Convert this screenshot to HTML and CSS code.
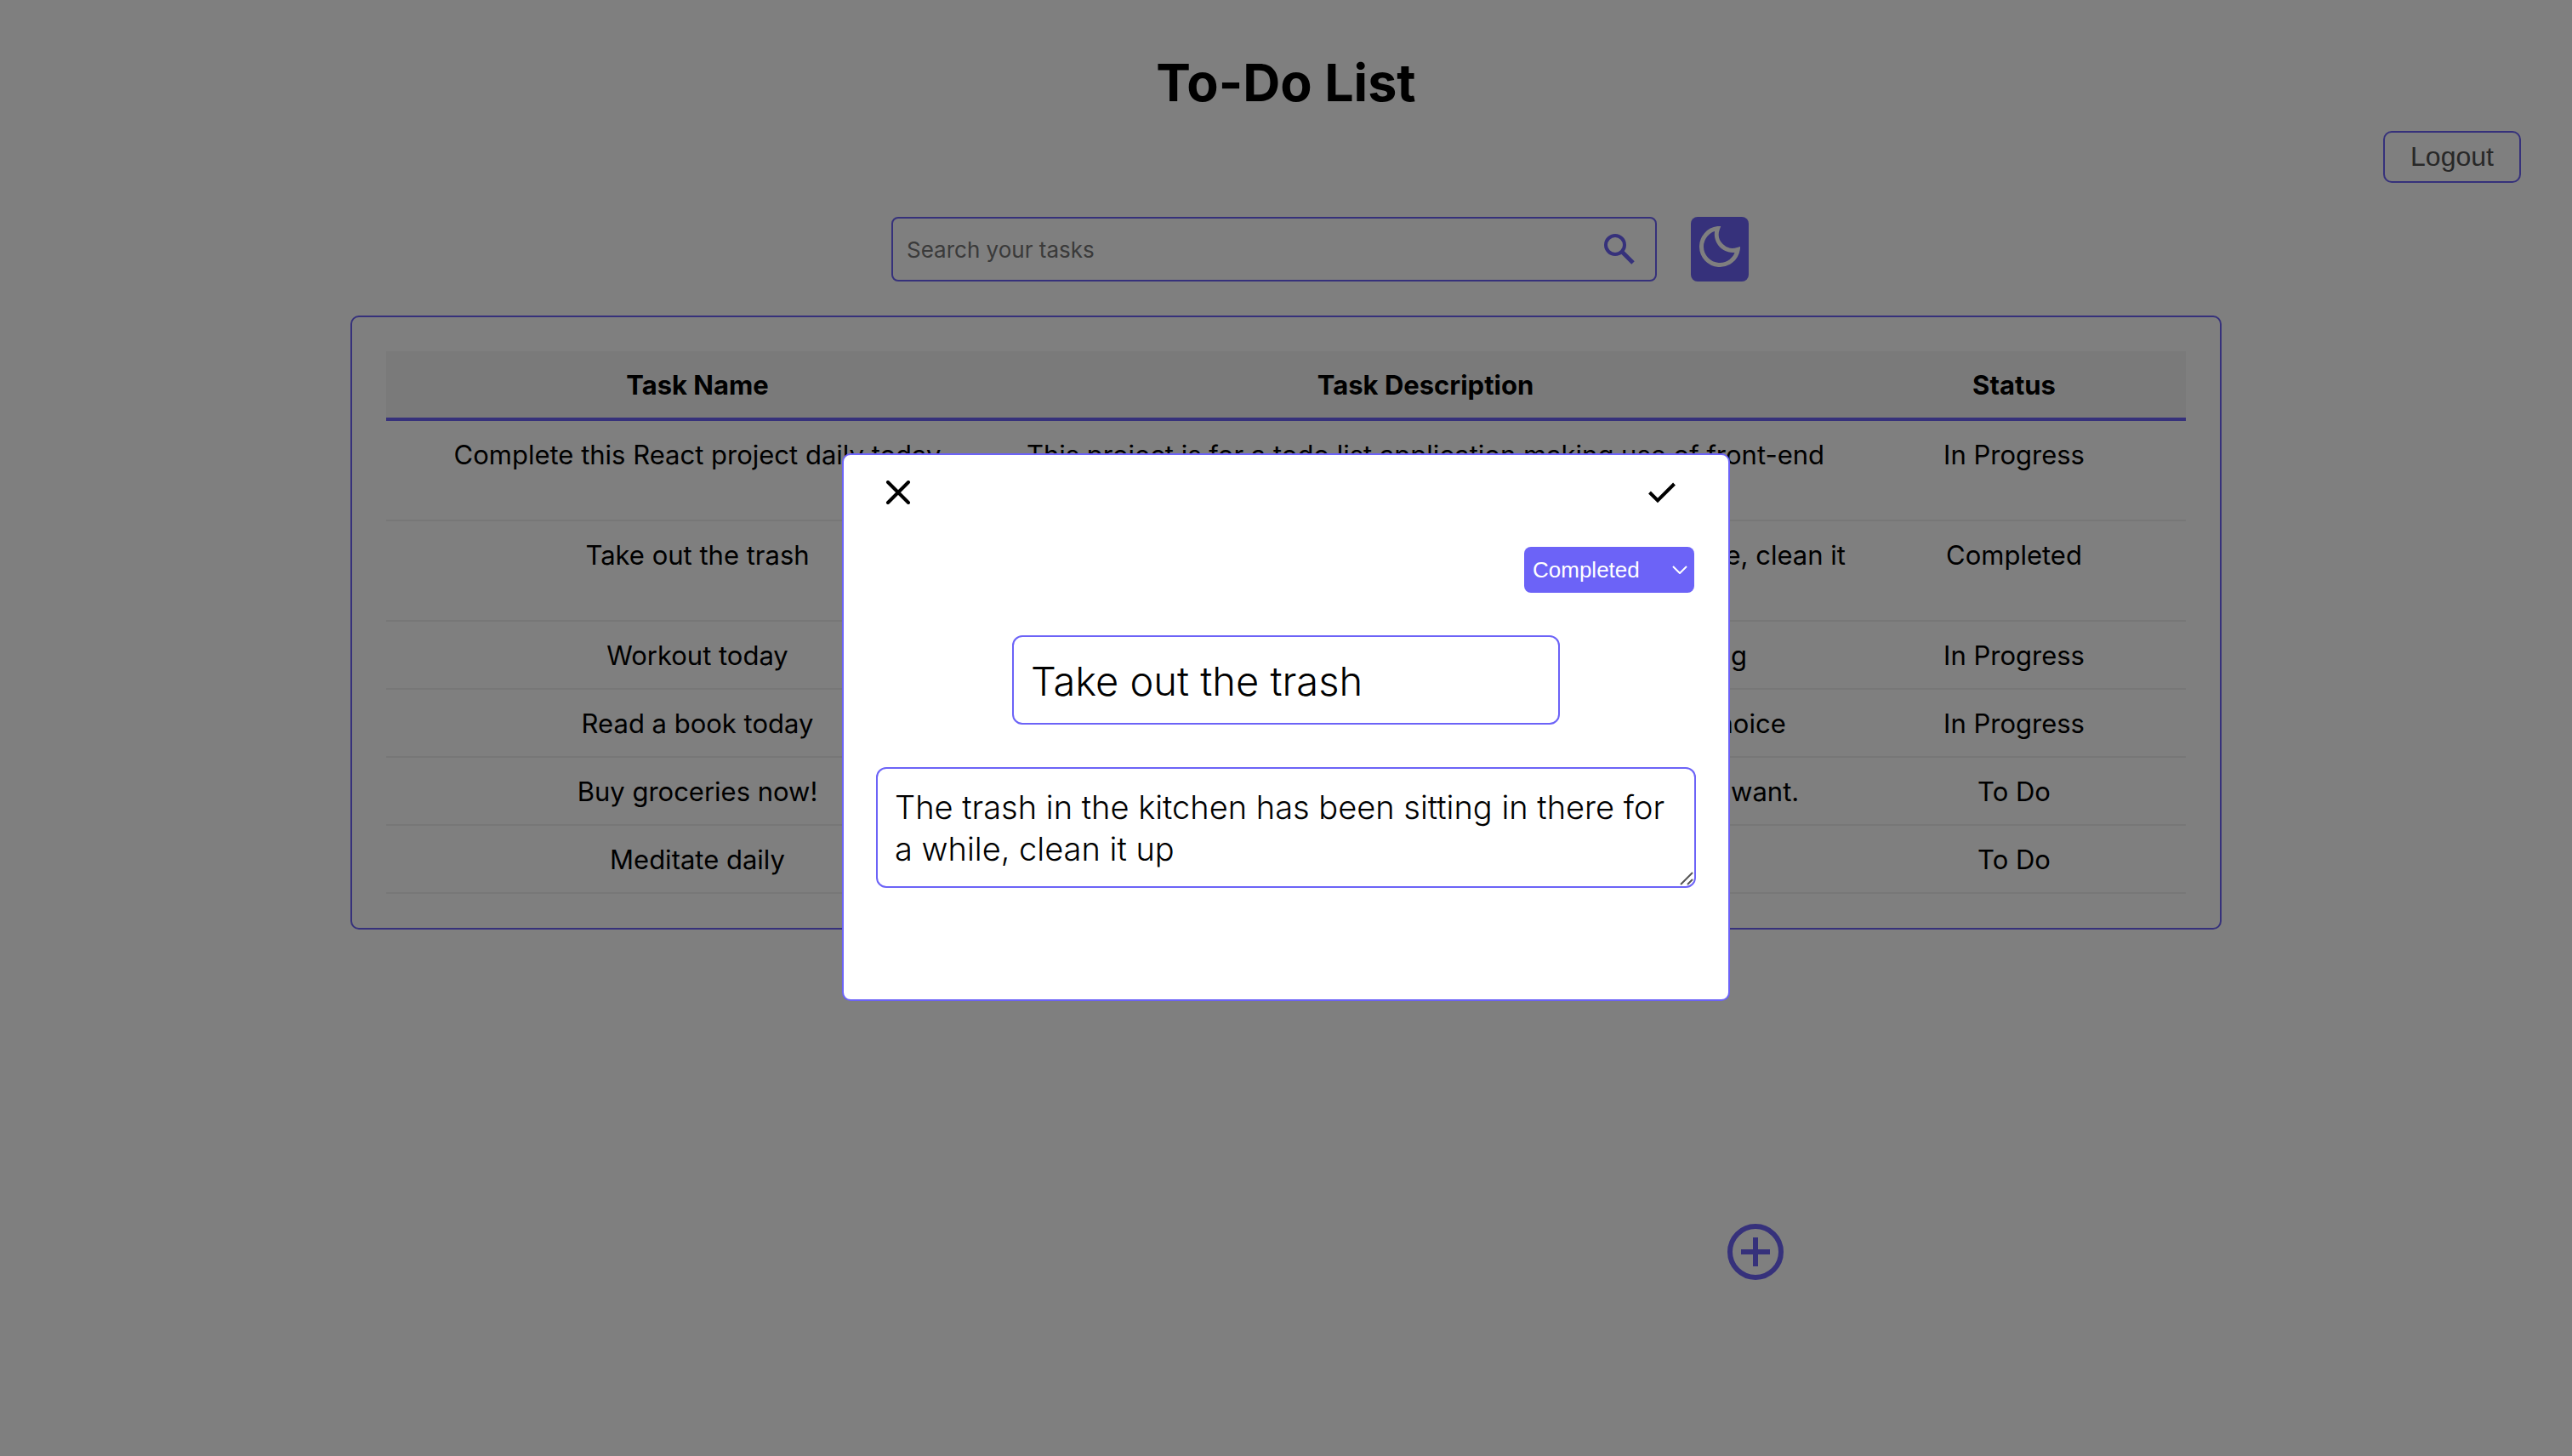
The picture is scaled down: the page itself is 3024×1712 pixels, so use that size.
FILE: index.html
```html
<!DOCTYPE html>
<html lang="en">
<head>
<meta charset="utf-8">
<meta name="viewport" content="width=device-width, initial-scale=1">
<title>To-Do List</title>
<link rel="stylesheet" href="styles.css">
</head>
<body>
<div class="page">
  <header class="header">
    <h1 class="title">To-Do List</h1>
    <button class="logout" type="button">Logout</button>
  </header>

  <div class="toolbar">
    <form class="search" role="search">
      <input class="search-input" type="text" placeholder="Search your tasks" aria-label="Search your tasks">
      <button class="search-button" type="button" aria-label="Search">
        <svg class="icon-search" viewBox="0 0 36 36" fill="none" stroke="currentColor" stroke-width="4">
          <circle cx="13" cy="13" r="11"/>
          <path d="M20.500 20.500 34 34" stroke-width="5"/>
        </svg>
      </button>
    </form>
    <button class="theme" type="button" aria-label="Dark mode">
      <svg class="icon-moon" viewBox="0 0 48 48" fill="none" stroke="currentColor" stroke-width="5" stroke-linejoin="miter">
        <path d="M21.600 2.600A21.500 21.500 0 1 0 45.200 27.500A19 19 0 0 1 21.600 2.600Z"/>
      </svg>
    </button>
  </div>

  <main class="card">
    <table class="tasks">
      <colgroup><col class="col-name"><col class="col-description"><col class="col-status"></colgroup>
      <thead>
        <tr><th scope="col">Task Name</th><th scope="col">Task Description</th><th scope="col">Status</th></tr>
      </thead>
      <tbody>
        <tr><td>Complete this React project daily today</td><td><div class="task-text">This project is for a todo list application making use of front-end technologies</div></td><td>In Progress</td></tr>
        <tr><td>Take out the trash</td><td><div class="task-text">The trash in the kitchen has been sitting in there for a while, clean it up</div></td><td>Completed</td></tr>
        <tr><td>Workout today</td><td><div class="task-text">Go to the gym for about an hour of strength training</div></td><td>In Progress</td></tr>
        <tr><td>Read a book today</td><td><div class="task-text">Read at least thirty pages from a new book of your choice</div></td><td>In Progress</td></tr>
        <tr><td>Buy groceries now!</td><td><div class="task-text">Buy milk, eggs, bread and any other snacks you really want.</div></td><td>To Do</td></tr>
        <tr><td>Meditate daily</td><td><div class="task-text">Meditate for ten minutes a day</div></td><td>To Do</td></tr>
      </tbody>
    </table>
  </main>

  <button class="add" type="button" aria-label="Add task">
    <svg class="icon-add" viewBox="0 0 66 66" fill="none" stroke="currentColor">
      <circle cx="33" cy="33" r="30" stroke-width="6"/>
      <path d="M33 16v34M16 33h34" stroke-width="6"/>
    </svg>
  </button>
</div>

<div class="overlay">
  <div class="modal" role="dialog" aria-modal="true" aria-label="Edit task">
    <div class="modal-actions">
      <button class="modal-button" type="button" aria-label="Close">
        <svg class="icon-action" viewBox="0 0 32 28" fill="none" stroke="currentColor" stroke-width="4" stroke-linecap="round">
          <path d="M4 2 28 26M28 2 4 26"/>
        </svg>
      </button>
      <button class="modal-button" type="button" aria-label="Save">
        <svg class="icon-action" viewBox="0 0 32 28" fill="none" stroke="currentColor" stroke-width="4">
          <path d="M1.500 14 11 23.500 30.500 4"/>
        </svg>
      </button>
    </div>
    <div class="status">
      <select class="status-select" aria-label="Status">
        <option>To Do</option>
        <option>In Progress</option>
        <option selected>Completed</option>
      </select>
      <svg class="status-arrow" viewBox="0 0 18 10" fill="none" stroke="currentColor" stroke-width="2">
        <path d="M1 1 9 9 17 1"/>
      </svg>
    </div>
    <input class="field name-field" type="text" value="Take out the trash" aria-label="Task name">
    <div class="description">
      <textarea class="field description-field" aria-label="Task description">The trash in the kitchen has been sitting in there for a while, clean it up</textarea>
      <svg class="grip" viewBox="0 0 16 16" fill="none" stroke="currentColor" stroke-width="2">
        <path d="M1 15 15 1M9 15 15 9"/>
      </svg>
    </div>
  </div>
</div>
</body>
</html>
```
FILE: styles.css
```css
:root {
  --accent: #6c63f7;
  --sans: Inter, "Noto Sans", sans-serif;
  --control: "Liberation Sans", Arial, sans-serif;
}

* {
  box-sizing: border-box;
}

body {
  margin: 0;
  background: #fff;
  color: #000;
  font-family: var(--sans);
  font-size: 31px;
  line-height: 38px;
}

button {
  padding: 0;
  border: 0;
  background: none;
  color: inherit;
}

svg {
  display: block;
}

.page {
  display: flex;
  flex-direction: column;
  align-items: center;
  min-height: 100vh;
}

.header {
  display: flex;
  flex-direction: column;
  align-items: center;
  width: 100%;
  padding: 57px 60px 0;
}

.title {
  margin: 0;
  font-size: 61px;
  line-height: 80px;
  font-weight: 700;
}

.logout {
  align-self: flex-end;
  width: 162px;
  height: 61px;
  margin-top: 17px;
  border: 2px solid var(--accent);
  border-radius: 10px;
  color: #505050;
  font-family: var(--control);
  font-size: 32px;
}

.toolbar {
  display: flex;
  align-items: stretch;
  gap: 40px;
  margin-top: 40px;
  padding-left: 80px;
}

.search {
  display: flex;
  align-items: center;
  width: 900px;
  height: 76px;
  padding: 0 24px 0 16px;
  border: 2px solid var(--accent);
  border-radius: 8px;
}

.search-input {
  flex: 1;
  border: 0;
  outline: 0;
  padding: 0;
  background: none;
  font-family: var(--sans);
  font-size: 26px;
}

.search-input::placeholder {
  color: #757575;
}

.search-button {
  color: var(--accent);
}

.icon-search {
  width: 36px;
  height: 36px;
}

.theme {
  display: flex;
  justify-content: center;
  width: 68px;
  padding-top: 11px;
  border-radius: 8px;
  background: var(--accent);
  color: #fff;
}

.icon-moon {
  width: 48px;
  height: 48px;
}

.card {
  width: 2200px;
  max-width: 96%;
  margin-top: 40px;
  padding: 40px;
  border: 2px solid var(--accent);
  border-radius: 10px;
}

.tasks {
  width: 100%;
  border-collapse: separate;
  border-spacing: 0;
  table-layout: fixed;
  text-align: center;
}

.col-name {
  width: 732px;
}

.col-status {
  width: 404px;
}

.tasks th {
  padding: 21px 0 19px;
  border-bottom: 4px solid var(--accent);
  background: #f4f4f4;
  font-weight: 700;
}

.tasks td {
  padding: 21px 0 19px;
  border-bottom: 2px solid #eee;
  vertical-align: top;
}

.task-text {
  margin: 0 -12px;
}

.add {
  position: fixed;
  left: calc(50% + 519px);
  bottom: 207px;
  color: var(--accent);
}

.icon-add {
  width: 66px;
  height: 66px;
}

.overlay {
  position: fixed;
  inset: 0;
  display: flex;
  align-items: center;
  justify-content: center;
  padding-bottom: 2px;
  background: rgba(0, 0, 0, 0.5);
}

.modal {
  display: flex;
  flex-direction: column;
  align-items: center;
  width: 1044px;
  min-height: 644px;
  padding: 30px 38px;
  border: 2px solid var(--accent);
  border-radius: 10px;
  background: #fff;
}

.modal-actions {
  display: flex;
  justify-content: space-between;
  width: 100%;
  padding: 0 24px 0 10px;
}

.icon-action {
  width: 32px;
  height: 28px;
}

.status {
  position: relative;
  align-self: flex-end;
  margin: 50px 2px 0 0;
  color: #fff;
}

.status-select {
  display: block;
  appearance: none;
  width: 200px;
  height: 54px;
  padding: 0 10px;
  border: 0;
  border-radius: 8px;
  background: var(--accent);
  color: inherit;
  font-family: var(--control);
  font-size: 26px;
}

.status-arrow {
  position: absolute;
  top: 22px;
  right: 8px;
  width: 18px;
  height: 10px;
  pointer-events: none;
}

.field {
  display: block;
  border: 2px solid var(--accent);
  border-radius: 12px;
  padding: 21px 20px 19px;
  background: #fff;
  color: #000;
  font-family: var(--sans);
  font-weight: 300;
}

.name-field {
  width: 644px;
  height: 105px;
  margin-top: 50px;
  font-size: 47px;
}

.description {
  position: relative;
  width: 100%;
  margin-top: 50px;
}

.description-field {
  width: 100%;
  height: 142px;
  font-size: 38px;
  line-height: 49px;
  resize: none;
  overflow: hidden;
}

.grip {
  position: absolute;
  right: 3px;
  bottom: 3px;
  width: 16px;
  height: 16px;
  color: #555;
  pointer-events: none;
}
```
